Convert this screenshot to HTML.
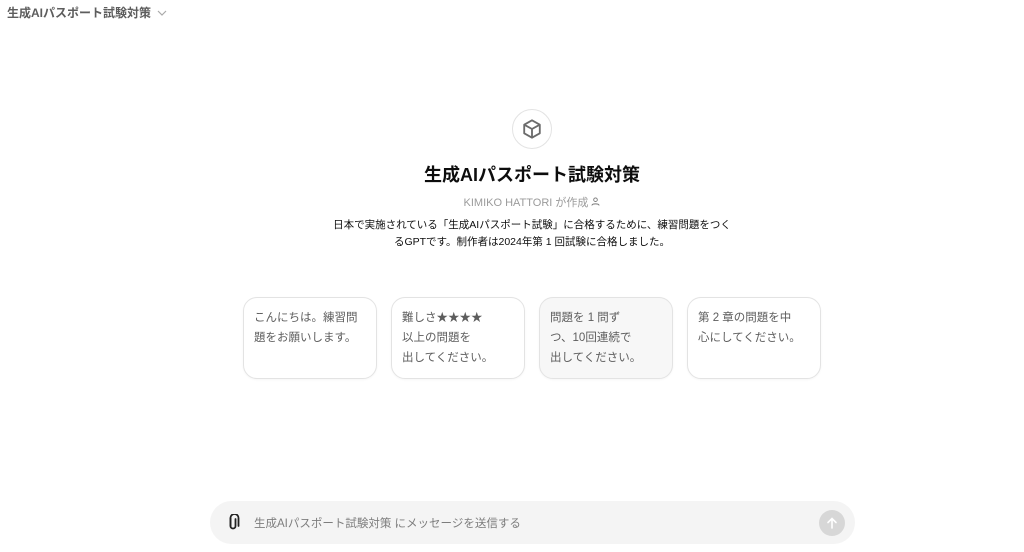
<!DOCTYPE html>
<html><head><meta charset="utf-8"><style>
*{margin:0;padding:0;box-sizing:border-box}
body{width:1024px;height:552px;background:#fff;font-family:"Liberation Sans","Noto Sans CJK JP",sans-serif;color:#0d0d0d;position:relative;overflow:hidden}
.hdr{position:absolute;left:7px;top:4px;font-size:12px;font-weight:bold;color:#5d5d5d;display:flex;align-items:center;gap:6px;white-space:nowrap}
.logo{position:absolute;left:512px;top:109px;width:40px;height:40px;border:1px solid #e3e3e3;border-radius:50%;display:flex;align-items:center;justify-content:center}
.title{position:absolute;left:0;width:1064px;top:161px;text-align:center;font-size:18px;font-weight:bold;white-space:nowrap}
.auth{position:absolute;left:0;width:1064px;top:194px;text-align:center;font-size:11px;color:#9b9b9b}
.desc{position:absolute;left:282px;width:500px;top:217px;text-align:center;font-size:10.5px;line-height:17px;color:#0d0d0d;white-space:nowrap}
.card{position:absolute;top:297px;width:134px;height:82px;border:1px solid #e3e3e3;border-radius:14px;padding:10px 10px;font-size:11.5px;line-height:20px;color:#5d5d5d;white-space:nowrap;box-shadow:0 1px 2px rgba(0,0,0,.04)}
.inp{position:absolute;left:210px;top:501px;width:645px;height:43px;background:#f4f4f4;border-radius:22px}
.ph{position:absolute;left:44px;top:14px;font-size:11.5px;color:#7d7d7d;white-space:nowrap}
.send{position:absolute;left:609px;top:9px;width:26px;height:26px;border-radius:50%;background:#d7d7d7;display:flex;align-items:center;justify-content:center}
</style></head><body>
<div class="hdr">生成AIパスポート試験対策 <svg width="10" height="10" viewBox="0 0 10 10"><path d="M1 3l4 4 4-4" fill="none" stroke="#aaa" stroke-width="1.2"/></svg></div>
<div class="logo"><svg width="22" height="22" viewBox="0 0 24 24" fill="none" stroke="#6b6b6b" stroke-width="2" stroke-linejoin="round"><path d="M12 2.5l8.5 4.8v9.4L12 21.5l-8.5-4.8V7.3z"/><path d="M3.5 7.3L12 12l8.5-4.7M12 12v9.5"/></svg></div>
<div class="title">生成AIパスポート試験対策</div>
<div class="auth">KIMIKO HATTORI が作成 <svg width="9" height="9" viewBox="0 0 10 10" fill="none" stroke="#777"><circle cx="5" cy="3" r="2"/><path d="M1 9.5c0-2.5 8-2.5 8 0"/></svg></div>
<div class="desc">日本で実施されている「生成AIパスポート試験」に合格するために、練習問題をつく<br>るGPTです。制作者は2024年第 1 回試験に合格しました。</div>
<div class="card" style="left:243px">こんにちは。練習問<br>題をお願いします。</div>
<div class="card" style="left:391px">難しさ★★★★<br>以上の問題を<br>出してください。</div>
<div class="card" style="left:539px;background:#f7f7f7">問題を 1 問ず<br>つ、10回連続で<br>出してください。</div>
<div class="card" style="left:687px">第 2 章の問題を中<br>心にしてください。</div>
<div class="inp">
<svg style="position:absolute;left:16px;top:13px" width="14" height="17" viewBox="0 0 14 17" fill="none" stroke="#222" stroke-width="1.8" stroke-linecap="round"><path d="M9.5 5v7a2.5 2.5 0 0 1-5 0V4a4 4 0 0 1 8 0v8"/><path d="M4.5 4v8"/></svg>
<div class="ph">生成AIパスポート試験対策 にメッセージを送信する</div>
<div class="send"><svg width="12" height="12" viewBox="0 0 12 12" fill="none" stroke="#fff" stroke-width="1.6" stroke-linecap="round"><path d="M6 11V1.5M2 5.5l4-4 4 4"/></svg></div>
</div>
</body></html>
